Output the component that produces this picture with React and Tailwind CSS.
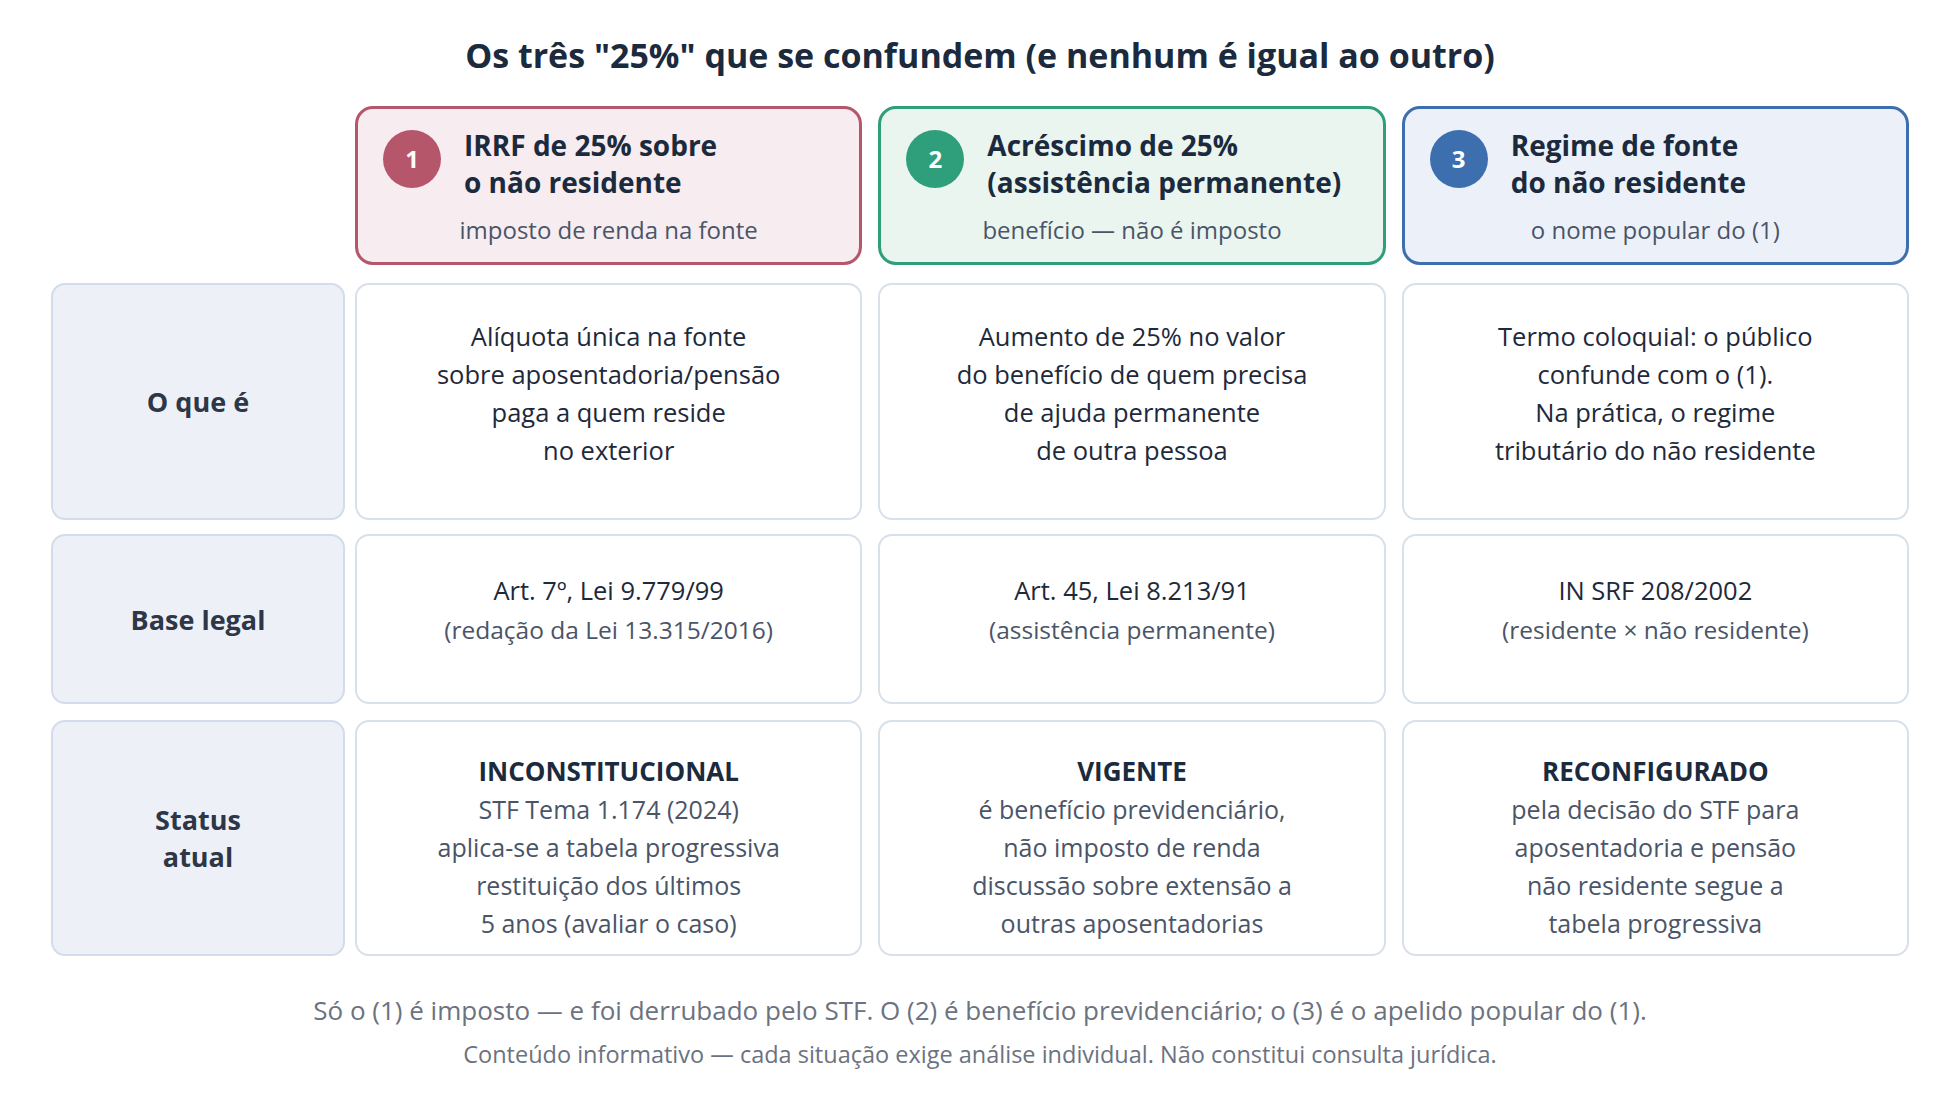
const cols = [
  {
    n: '1',
    title: ['IRRF de 25% sobre', 'o não residente'],
    sub: 'imposto de renda na fonte',
    card: 'border-[#b5566b] bg-[#f7ecef]',
    dot: 'bg-[#b5566b]',
  },
  {
    n: '2',
    title: ['Acréscimo de 25%', '(assistência permanente)'],
    sub: 'benefício — não é imposto',
    card: 'border-[#2f9e7a] bg-[#eaf5f0]',
    dot: 'bg-[#2f9e7a]',
  },
  {
    n: '3',
    title: ['Regime de fonte', 'do não residente'],
    sub: 'o nome popular do (1)',
    card: 'border-[#3d6fae] bg-[#ecf1f9]',
    dot: 'bg-[#3d6fae]',
  },
];

const whatIs = [
  ['Alíquota única na fonte', 'sobre aposentadoria/pensão', 'paga a quem reside', 'no exterior'],
  ['Aumento de 25% no valor', 'do benefício de quem precisa', 'de ajuda permanente', 'de outra pessoa'],
  ['Termo coloquial: o público', 'confunde com o (1).', 'Na prática, o regime', 'tributário do não residente'],
];

const legal = [
  ['Art. 7º, Lei 9.779/99', '(redação da Lei 13.315/2016)'],
  ['Art. 45, Lei 8.213/91', '(assistência permanente)'],
  ['IN SRF 208/2002', '(residente × não residente)'],
];

const status = [
  ['INCONSTITUCIONAL', 'STF Tema 1.174 (2024)', 'aplica-se a tabela progressiva', 'restituição dos últimos', '5 anos (avaliar o caso)'],
  ['VIGENTE', 'é benefício previdenciário,', 'não imposto de renda', 'discussão sobre extensão a', 'outras aposentadorias'],
  ['RECONFIGURADO', 'pela decisão do STF para', 'aposentadoria e pensão', 'não residente segue a', 'tabela progressiva'],
];

function Label({ children }) {
  return (
    <div className="w-[294px] shrink-0 rounded-[14px] border-2 border-[#d3dcea] bg-[#edf1f7] flex items-center justify-center text-center text-[27px] leading-[37px] font-bold text-[#2d3748]">
      {children}
    </div>
  );
}

function Cell({ children, className = '' }) {
  return (
    <div className={`rounded-[14px] border-2 border-[#d8e0eb] bg-white flex flex-col items-center justify-center text-center ${className}`}>
      {children}
    </div>
  );
}

export default function App() {
  return (
    <div className="min-h-[1120px] bg-white font-['Open_Sans','Noto_Sans',sans-serif]">
      <div className="w-[1858px] mx-auto pt-[35px]">
        <h1 className="text-center text-[34px] leading-[40px] font-bold text-[#1b2a3d]">
          Os três "25%" que se confundem (e nenhum é igual ao outro)
        </h1>

        {/* header row */}
        <div className="flex mt-[31px] h-[159px]">
          <div className="w-[294px] shrink-0" />
          <div className="ml-[10px] flex-1 grid grid-cols-3 gap-4">
            {cols.map((c) => (
              <div key={c.n} className={`rounded-[18px] border-[3px] ${c.card} pt-[18px] px-[25px]`}>
                <div className="flex items-start gap-[23px]">
                  <div className={`mt-[3px] w-[58px] h-[58px] shrink-0 rounded-full ${c.dot} flex items-center justify-center text-white text-[24px] font-bold`}>
                    {c.n}
                  </div>
                  <div className="text-[28px] leading-[37px] font-bold text-[#1b2a3d] whitespace-nowrap">
                    {c.title[0]}
                    <br />
                    {c.title[1]}
                  </div>
                </div>
                <div className="mt-[12px] text-center text-[24px] leading-[34px] text-[#4a5568]">{c.sub}</div>
              </div>
            ))}
          </div>
        </div>

        {/* O que é */}
        <div className="flex mt-[18px] h-[237px]">
          <Label>O que é</Label>
          <div className="ml-[10px] flex-1 grid grid-cols-3 gap-4">
            {whatIs.map((lines, i) => (
              <Cell key={i} className="pb-[18px]">
                <div className="text-[25.5px] leading-[38px] text-[#1e293b]">
                  {lines.map((l) => (
                    <div key={l}>{l}</div>
                  ))}
                </div>
              </Cell>
            ))}
          </div>
        </div>

        {/* Base legal */}
        <div className="flex mt-[14px] h-[170px]">
          <Label>Base legal</Label>
          <div className="ml-[10px] flex-1 grid grid-cols-3 gap-4">
            {legal.map((l, i) => (
              <Cell key={i} className="pb-[18px]">
                <div className="text-[25.5px] leading-[36px] text-[#1e293b]">{l[0]}</div>
                <div className="mt-[4px] text-[24.5px] leading-[36px] text-[#4a5568]">{l[1]}</div>
              </Cell>
            ))}
          </div>
        </div>

        {/* Status atual */}
        <div className="flex mt-[16px] h-[236px]">
          <Label>
            Status
            <br />
            atual
          </Label>
          <div className="ml-[10px] flex-1 grid grid-cols-3 gap-4">
            {status.map((s, i) => (
              <Cell key={i} className="pt-[18px]">
                <div className="text-[26px] leading-[38px] font-bold text-[#1b2a3d]">{s[0]}</div>
                {s.slice(1).map((l) => (
                  <div key={l} className="text-[25px] leading-[38px] text-[#4a5568]">
                    {l}
                  </div>
                ))}
              </Cell>
            ))}
          </div>
        </div>

        <p className="mt-[38px] text-center text-[26px] leading-[32px] text-[#6b7280] whitespace-nowrap">
          Só o (1) é imposto — e foi derrubado pelo STF. O (2) é benefício previdenciário; o (3) é o apelido popular do (1).
        </p>
        <p className="mt-[13px] text-center text-[23.5px] leading-[30px] text-[#6b7280] whitespace-nowrap">
          Conteúdo informativo — cada situação exige análise individual. Não constitui consulta jurídica.
        </p>
      </div>
    </div>
  );
}
